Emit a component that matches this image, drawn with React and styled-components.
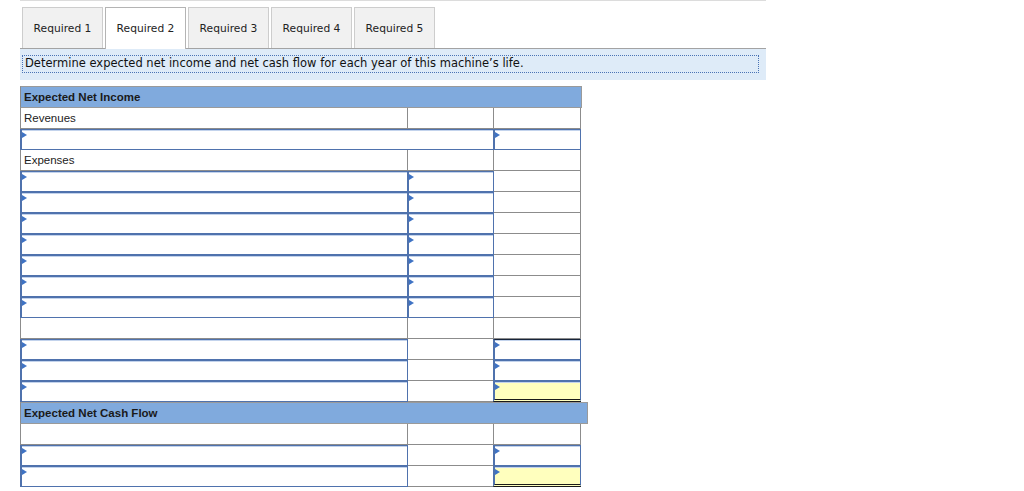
import * as React from "react"
import styled, { createGlobalStyle } from "styled-components"

const GlobalStyle = createGlobalStyle`
  body {
    margin: 0;
    background: #ffffff;
    font-family: "Liberation Sans", Arial, sans-serif;
  }
`

const Page = styled.div`
  width: 746px;
  margin-left: 20px;
  border-top: 1px solid #dcdcdc;
  padding-top: 6px;
`

const TabBar = styled.div`
  display: flex;
  gap: 2px;
  padding-left: 2px;
  height: 41px;
`

const Tab = styled.div`
  position: relative;
  z-index: 1;
  box-sizing: border-box;
  width: 81px;
  height: ${(p) => (p.$active ? "42px" : "41px")};
  display: flex;
  align-items: center;
  justify-content: center;
  background: ${(p) => (p.$active ? "#ffffff" : "#f1f1f1")};
  border: 1px solid ${(p) => (p.$active ? "#b4b4b4" : "#cdcdcd")};
  border-bottom: none;
  font-family: "DejaVu Sans", Verdana, sans-serif;
  font-size: 10.7px;
  color: #222;
`

const Prompt = styled.div`
  box-sizing: border-box;
  height: 32px;
  border-top: 1px solid #a3a3a3;
  background: #deebf8;
  padding: 6px 8px 0 2px;
`

const PromptText = styled.div`
  box-sizing: border-box;
  width: 737px;
  height: 18px;
  border: 1px dotted #4a73b5;
  padding-left: 2px;
  font-family: "DejaVu Sans", Verdana, sans-serif;
  font-size: 11.5px;
  line-height: 15px;
  color: #111;
`

const Sheet = styled.div`
  margin-top: 6px;
  width: 562px;
`

const Row = styled.div`
  display: grid;
  grid-template-columns: 388px 86px 87px;
  height: 21px;
`

const HeaderRow = styled.div`
  box-sizing: border-box;
  width: ${(p) => p.$width || 562}px;
  height: 22px;
  background: #80aadd;
  border: 1px solid #9a9a9a;
  border-left-color: #8a8a8a;
  padding-left: 3px;
  font-weight: bold;
  font-size: 11.5px;
  line-height: 20px;
  color: #1a1a1a;
`

const Cell = styled.div`
  position: relative;
  box-sizing: border-box;
  grid-column: span ${(p) => p.$span || 1};
  border-right: 1px solid #8c8c8c;
  border-bottom: 1px solid #8c8c8c;
  border-left: ${(p) => (p.$first ? "1px solid #8c8c8c" : "none")};
  padding-left: 3px;
  font-size: 11.5px;
  line-height: 20px;
  color: #222;
`

const InputBox = styled.div`
  position: absolute;
  inset: 0 -1px -1px -1px;
  box-sizing: border-box;
  border: 1px solid #4f72ad;
  border-left-width: 2px;
  border-top-color: ${(p) => (p.$rule ? "#16233a" : "#4f72ad")};
  box-shadow: inset 0 1px 0 #c3d3ec;
  background: ${(p) => (p.$total ? "#ffffbe" : "#ffffff")};
  border-bottom: ${(p) => (p.$total ? "3px double #1a1a1a" : "1px solid #4f72ad")};

  &::before {
    content: "";
    position: absolute;
    left: 0;
    top: 2px;
    border-top: 3px solid transparent;
    border-bottom: 3px solid transparent;
    border-left: 5px solid #3f73c4;
  }
`

const Blank = ({ first, label, span }) => (
  <Cell $first={first} $span={span}>{label}</Cell>
)

const InputCell = ({ first, span, total, rule }) => (
  <Cell $first={first} $span={span}>
    <InputBox $total={total} $rule={rule} />
  </Cell>
)

const App = () => {
  const expenseRows = [0, 1, 2, 3, 4, 5, 6]
  return (
    <>
      <GlobalStyle />
      <Page>
        <TabBar>
          <Tab>Required 1</Tab>
          <Tab $active>Required 2</Tab>
          <Tab>Required 3</Tab>
          <Tab>Required 4</Tab>
          <Tab>Required 5</Tab>
        </TabBar>
        <Prompt>
          <PromptText>Determine expected net income and net cash flow for each year of this machine’s life.</PromptText>
        </Prompt>

        <Sheet>
          <HeaderRow $width={562}>Expected Net Income</HeaderRow>
          <Row>
            <Blank first label="Revenues" />
            <Blank />
            <Blank />
          </Row>
          <Row>
            <InputCell first span={2} />
            <InputCell />
          </Row>
          <Row>
            <Blank first label="Expenses" />
            <Blank />
            <Blank />
          </Row>
          {expenseRows.map((i) => (
            <Row key={i}>
              <InputCell first />
              <InputCell />
              <Blank />
            </Row>
          ))}
          <Row>
            <Blank first />
            <Blank />
            <Blank />
          </Row>
          <Row>
            <InputCell first />
            <Blank />
            <InputCell rule />
          </Row>
          <Row>
            <InputCell first />
            <Blank />
            <InputCell />
          </Row>
          <Row>
            <InputCell first />
            <Blank />
            <InputCell total />
          </Row>

          <HeaderRow $width={568}>Expected Net Cash Flow</HeaderRow>
          <Row>
            <Blank first />
            <Blank />
            <Blank />
          </Row>
          <Row>
            <InputCell first />
            <Blank />
            <InputCell />
          </Row>
          <Row>
            <InputCell first />
            <Blank />
            <InputCell total />
          </Row>
        </Sheet>
      </Page>
    </>
  )
}

export default App
